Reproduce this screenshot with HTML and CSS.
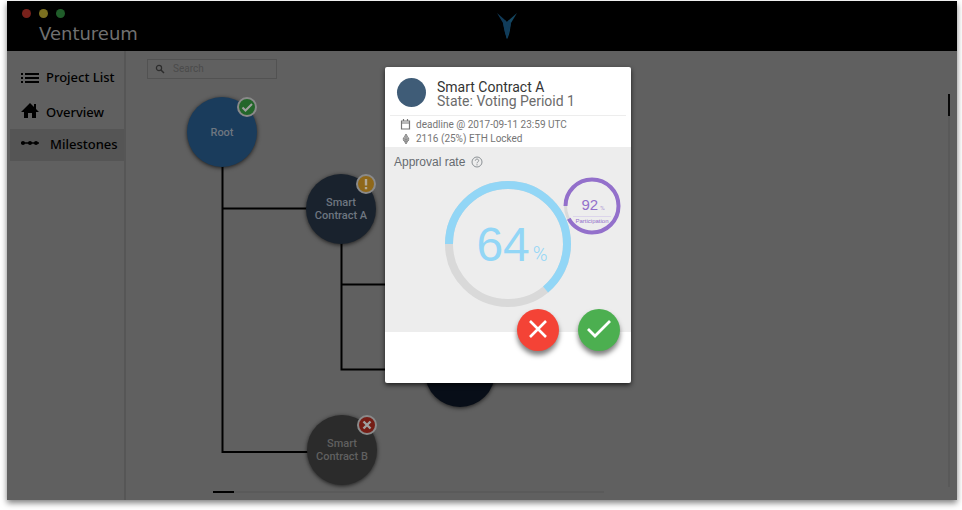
FILE: index.html
```html
<!DOCTYPE html>
<html lang="en">
<head>
<meta charset="utf-8">
<title>Ventureum</title>
<link rel="stylesheet" href="styles.css">
</head>
<body>
<div class="window">
  <header class="topbar">
    <div class="brand">
      <div class="lights"><span class="light red"></span><span class="light yellow"></span><span class="light green"></span></div>
      <h1>Ventureum</h1>
    </div>
    <svg class="logo" viewBox="0 0 22 28" aria-hidden="true">
      <path d="M1 1 9 8 12 12 11 27C9 22 8 17 7 11Z" fill="#103a58"/>
      <path d="M21 1 13 8 8 13 11 27C14 22 14 17 15 11Z" fill="#154761"/>
      <path d="M9 8 11 10 13 8 15 11 13 20 11 27 9 20 7 11Z" fill="#113c5a"/>
    </svg>
  </header>
  <div class="body">
    <nav class="sidebar">
      <a class="item" href="#projects">
        <svg viewBox="0 0 18 18" aria-hidden="true"><path d="M0 6h2M0 10h2M0 14h2M4 6h14M4 10h14M4 14h14" stroke="#000" stroke-width="2"/></svg>
        <span>Project List</span></a>
      <a class="item" href="#overview">
        <svg viewBox="0 0 18 18" aria-hidden="true"><path d="M9 0 0 9h3v6h4v-5h4v5h4V9h3l-3-3V1h-2v3Z"/></svg>
        <span>Overview</span></a>
      <a class="item active" href="#milestones">
        <svg viewBox="0 0 18 18" aria-hidden="true"><path d="M0 8h18" stroke="#000" stroke-width="1.500"/><circle cx="2" cy="8" r="2"/><circle cx="9" cy="8" r="2"/><circle cx="15" cy="8" r="2"/></svg>
        <span>Milestones</span></a>
    </nav>
    <main class="canvas">
      <label class="search">
        <svg viewBox="0 0 10 10" aria-hidden="true"><circle cx="4" cy="4" r="2.600" fill="none" stroke="#2c2c2c" stroke-width="1.200"/><path d="M6 6 9 9" stroke="#2c2c2c" stroke-width="1.500"/></svg>
        <input type="search" placeholder="Search" aria-label="Search">
      </label>
      <svg class="edges" width="400" height="420" aria-hidden="true">
        <path d="M97.500 100V401H190M97.500 157.500H190M216.500 180V318.500H310M216.500 233.500H310" fill="none" stroke="#000" stroke-width="2"/>
      </svg>
      <div class="node root"><span>Root</span>
        <svg class="badge" viewBox="0 0 20 20" aria-hidden="true"><circle cx="10" cy="10" r="9" fill="#23662a" stroke="#8a8a8a" stroke-width="2"/><path d="M5.500 10.500 8.500 13.500 15 7" fill="none" stroke="#a0a0a0" stroke-width="2"/></svg>
      </div>
      <div class="node contract-a"><span>Smart<br>Contract A</span>
        <svg class="badge" viewBox="0 0 20 20" aria-hidden="true"><circle cx="10" cy="10" r="9" fill="#8f681a" stroke="#8a8a8a" stroke-width="2"/><path d="M10 5v6.500M10 13v2.200" stroke="#b0a898" stroke-width="2.400"/></svg>
      </div>
      <div class="node hidden-node"></div>
      <div class="node contract-b"><span>Smart<br>Contract B</span>
        <svg class="badge" viewBox="0 0 20 20" aria-hidden="true"><circle cx="10" cy="10" r="9" fill="#751d15" stroke="#8a8a8a" stroke-width="2"/><path d="M6.500 6.500 13.500 13.500M13.500 6.500 6.500 13.500" stroke="#a0a0a0" stroke-width="2.400"/></svg>
      </div>
      <div class="track-x"><div class="thumb-x"></div></div>
      <div class="track-y"><div class="thumb-y"></div></div>
    </main>
  </div>
  <div class="overlay">
    <section class="dialog" role="dialog" aria-labelledby="dialog-title">
      <div class="dialog-head">
        <div class="avatar"></div>
        <div>
          <h2 id="dialog-title">Smart Contract A</h2>
          <p class="state">State: Voting Perioid 1</p>
        </div>
      </div>
      <div class="facts">
        <p><svg viewBox="0 0 12 12" aria-hidden="true"><path d="M1.500 2h8v8h-8ZM1.500 4h8M3.500 0v2M7.500 0v2" fill="none" stroke="#757575" stroke-width="1.200"/></svg>deadline @ 2017-09-11 23:59 UTC</p>
        <p><svg viewBox="0 0 12 12" aria-hidden="true"><path d="M6 1 9 6 6 11 3 6Z" fill="#bbb" stroke="#999"/><path d="M3 5 6 7 9 5M3 7 6 9 9 7M6 1v10" fill="none" stroke="#888"/></svg>2116 (25%) ETH Locked</p>
      </div>
      <div class="rates">
        <p class="caption">Approval rate
          <svg viewBox="0 0 12 12" aria-hidden="true"><circle cx="6" cy="6" r="5" fill="none" stroke="#8b9094"/><path d="M4.300 4.700C4.400 2.500 7.700 2.600 7.700 4.700 7.700 5.900 6 5.900 6 7.300M6 8.200v1.200" fill="none" stroke="#8b9094"/></svg>
        </p>
        <div class="gauge">
          <svg viewBox="0 0 128 128" aria-hidden="true">
            <circle cx="64" cy="64" r="59" fill="none" stroke="#d9d9d9" stroke-width="8"/>
            <circle cx="64" cy="64" r="59" fill="none" stroke="#92d6f6" stroke-width="8" pathLength="100" stroke-dasharray="64 36" transform="rotate(180 64 64)"/>
          </svg>
          <p><span class="value">64</span><span class="unit">%</span></p>
        </div>
        <div class="gauge small">
          <svg viewBox="0 0 58 58" aria-hidden="true">
            <circle cx="29" cy="29" r="26.500" fill="none" stroke="#dadada" stroke-width="3"/>
            <circle cx="29" cy="29" r="26.500" fill="none" stroke="#9370cb" stroke-width="4" pathLength="100" stroke-dasharray="92 8" transform="rotate(180 29 29)"/>
          </svg>
          <div class="small-text">
            <p><span class="value">92</span><span class="unit">%</span></p>
            <p class="name">Participation</p>
          </div>
        </div>
      </div>
      <div class="actions">
        <button class="reject" type="button" aria-label="Reject"><svg viewBox="0 0 42 42" aria-hidden="true"><path d="M13 12 29 28M29 12 13 28" stroke="#fff" stroke-width="2.600"/></svg></button>
        <button class="approve" type="button" aria-label="Approve"><svg viewBox="0 0 42 42" aria-hidden="true"><path d="M10 20 17 27 32 12" fill="none" stroke="#fff" stroke-width="2.800"/></svg></button>
      </div>
    </section>
  </div>
</div>
</body>
</html>
```
FILE: styles.css
```css
* { box-sizing: border-box; }
body {
  margin: 0;
  height: 100vh;
  padding: 1px 5px 10px 7px;
  display: flex;
  background: #fff;
  font-family: Roboto, "Liberation Sans", sans-serif;
}
h1, h2, p { margin: 0; font-weight: 400; }
svg { display: block; flex: none; }

.window {
  flex: 1;
  position: relative;
  display: flex;
  flex-direction: column;
  background: #606060;
  box-shadow: 0 3px 6px rgba(0, 0, 0, .5);
}
.topbar {
  display: grid;
  grid-template-columns: 1fr auto 1fr;
  height: 50px;
  padding-left: 15px;
  background: #000;
}
.lights { display: flex; gap: 8px; padding-top: 8px; }
.light { width: 9px; height: 9px; border-radius: 50%; }
.red { background: #78211b; }
.yellow { background: #7b7020; }
.green { background: #205d2a; }
.brand h1 {
  margin: 2px 0 0 17px;
  font: 18px/28px "DejaVu Sans", sans-serif;
  color: #707070;
}
.logo { width: 22px; height: 28px; margin: 11px 0 0 34px; }

.body { flex: 1; display: flex; min-height: 0; }
.sidebar {
  width: 119px;
  padding-top: 9px;
  border-right: 2px solid #565656;
}
.item {
  display: flex;
  align-items: center;
  gap: 7px;
  height: 35px;
  padding: 0 0 2px 14px;
  color: #000;
  font: 500 13px/18px "Noto Sans", sans-serif;
  text-decoration: none;
  white-space: nowrap;
}
.item svg { width: 18px; height: 18px; }
.item.active { height: 32px; gap: 11px; margin: -1px 0 0 3px; padding-left: 11px; background: #555; }

.canvas { flex: 1; position: relative; padding: 8px 21px; }
.search {
  display: flex;
  align-items: center;
  gap: 8px;
  width: 130px;
  height: 20px;
  padding-left: 7px;
  border: 1px solid #525252;
}
.search svg { width: 10px; height: 10px; }
.search input {
  width: 90px;
  padding: 0;
  border: 0;
  outline: 0;
  background: none;
  color: #444;
  font: 10px/14px Roboto, sans-serif;
}
.search input::placeholder { color: #4b4b4b; opacity: 1; }

.edges { position: absolute; left: -1px; top: 0; }
.node {
  position: absolute;
  display: flex;
  align-items: center;
  justify-content: center;
  width: 70px;
  height: 70px;
  border-radius: 50%;
  color: #6e7680;
  font: 500 11px/13px Roboto, sans-serif;
  text-align: center;
  white-space: nowrap;
  box-shadow: 0 1px 4px rgba(0, 0, 0, .7);
}
.badge { position: absolute; right: 0; top: 0; width: 20px; height: 20px; }
.root { left: 61px; top: 46px; background: #1a3c5c; }
.contract-a { left: 180px; top: 123px; background: #19222d; }
.contract-b { left: 181px; top: 364px; background: #2b2b2b; color: #606060; }
.hidden-node { left: 299px; top: 286px; background: #080e18; }
.track-x { position: absolute; left: 87px; right: 353px; bottom: 7px; height: 2px; background: #5a5a5a; }
.thumb-x { width: 21px; height: 2px; background: #000; }
.track-y { position: absolute; right: 7px; top: 43px; bottom: 13px; width: 2px; background: #595959; }
.thumb-y { width: 2px; height: 22px; background: #080808; }

.overlay {
  position: absolute;
  inset: 0;
  display: flex;
  align-items: flex-start;
  justify-content: center;
  padding: 66px 0 0 52px;
}
.dialog {
  width: 246px;
  overflow: hidden;
  border-radius: 2px;
  background: #fff;
  box-shadow: 0 2px 5px rgba(0, 0, 0, .7);
}
.dialog-head {
  display: flex;
  gap: 11px;
  margin: 0 5px;
  padding: 11px 0 7px 7px;
  border-bottom: 1px solid #ededed;
}
.avatar { width: 29px; height: 29px; border-radius: 50%; background: #3f5c77; }
.dialog-head h2, .state { font-size: 14px; line-height: 14px; }
.dialog-head h2 { margin-top: 2px; color: #333; }
.state { color: #6b6b6b; }
.facts { padding: 2px 0 1px 15px; color: #757575; font-size: 10px; line-height: 14px; }
.facts p { display: flex; align-items: center; gap: 4px; }
.facts svg { width: 12px; height: 12px; }

.rates { position: relative; padding: 7px 9px 24px; background: #ededed; }
.caption { display: flex; align-items: center; gap: 6px; color: #666b70; font: 12px/16px "Liberation Sans", sans-serif; }
.caption svg { width: 12px; height: 12px; }
.gauge { position: relative; width: 128px; height: 128px; margin: 10px auto 0; color: #92d6f6; }
.gauge > svg { width: 100%; height: 100%; }
.gauge > p { position: absolute; inset: 0; display: flex; align-items: baseline; justify-content: center; gap: 3px; padding-left: 8px; line-height: 130px; }
.value { font: 48px "Liberation Sans", sans-serif; }
.unit { font-size: 20px; font-weight: 300; }
.gauge > p .value { line-height: 130px; }
.gauge.small { position: absolute; right: 10px; top: 30px; width: 58px; height: 58px; margin: 0; color: #9370cb; }
.small-text { position: absolute; inset: 20px 10px 10px; text-align: center; }
.small-text p { display: flex; align-items: baseline; justify-content: center; gap: 2px; padding-left: 2px; border-bottom: 1px solid #dcd5eb; line-height: 16px; }
.small-text .value { font: 15px/16px "Liberation Sans", sans-serif; }
.small-text .unit { font-size: 6px; }
.small-text .name { padding: 0; border: 0; font: 6px/8px "Liberation Sans", sans-serif; }

.actions { position: relative; display: flex; justify-content: flex-end; gap: 19px; margin-top: -23px; padding: 0 11px 32px; }
.actions button { width: 42px; height: 42px; padding: 0; border: 0; border-radius: 50%; box-shadow: 0 4px 5px rgba(0, 0, 0, .5); }
.reject { background: #f44336; }
.approve { background: #4caf50; }
```
